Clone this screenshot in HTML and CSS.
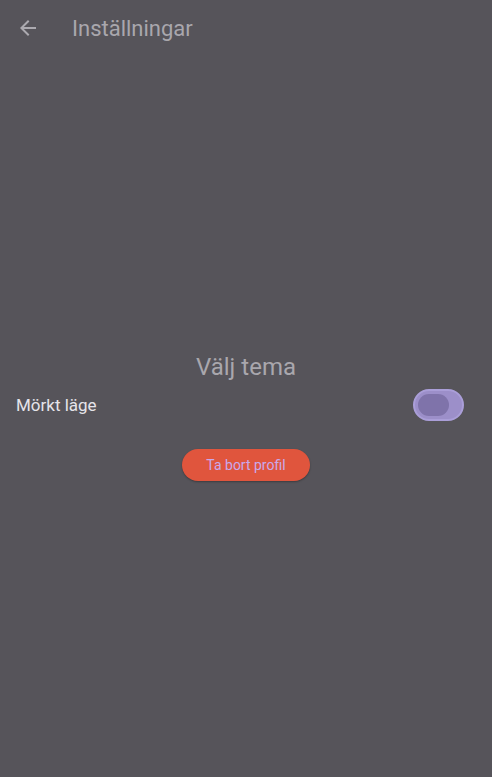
FILE: index.html
```html
<!DOCTYPE html>
<html lang="sv">
<head>
<meta charset="utf-8">
<link rel="stylesheet" href="styles.css">
</head>
<body>
<div class="app">
  <header class="bar">
    <button class="back" aria-label="Tillbaka">
      <svg width="24" height="24" viewBox="0 0 24 24"><path d="M20 11H7.83l5.59-5.59L12 4l-8 8 8 8 1.41-1.41L7.83 13H20v-2z" fill="currentColor"/></svg>
    </button>
    <h1 class="title">Inställningar</h1>
  </header>
  <main class="content">
    <h2 class="heading">Välj tema</h2>
    <div class="row">
      <span class="label">Mörkt läge</span>
      <span class="switch"><span class="thumb"></span></span>
    </div>
    <button class="danger">Ta bort profil</button>
  </main>
</div>
</body>
</html>
```
FILE: styles.css
```css
html, body { margin: 0; padding: 0; height: 100%; }
body { background: #56545a; font-family: Roboto, "Noto Sans", sans-serif; }
.app { display: flex; flex-direction: column; height: 100vh; }
.bar { height: 56px; display: flex; align-items: center; padding: 0 16px; flex: none; }
.back { background: none; border: 0; padding: 0; width: 24px; height: 24px; color: #acaab0; display: flex; margin-right: 32px; }
.title { margin: 0; font-size: 22px; font-weight: 400; color: #a9a7ad; }
.content { flex: 1; display: flex; flex-direction: column; align-items: center; justify-content: center; }
.heading { margin: 0; font-size: 24px; font-weight: 400; color: #a9a7ad; line-height: 28px; }
.row { align-self: stretch; display: flex; align-items: center; justify-content: space-between; padding: 6px 28px 6px 16px; margin-top: 2px; }
.label { font-size: 17px; color: #e6e4ea; }
.switch { box-sizing: border-box; width: 51px; height: 32px; border-radius: 16px; background: #9c8fc9; border: 2px solid #aa9ed8; display: flex; align-items: center; padding-left: 3px; }
.thumb { width: 31px; height: 22px; border-radius: 11px; background: #7f73aa; }
.danger { margin-top: 22px; background: #e0553d; color: #c9a9ec; border: 0; border-radius: 16px; height: 32px; padding: 0 24px; font-family: Roboto, sans-serif; font-size: 14px; box-shadow: 0 1px 2px rgba(0,0,0,0.3); }
```
